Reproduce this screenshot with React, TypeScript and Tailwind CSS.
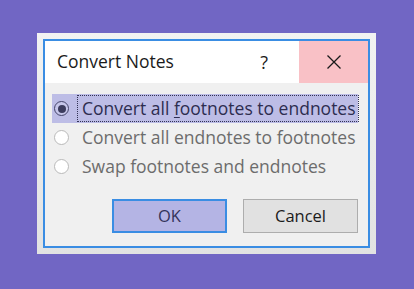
import { useState } from "react";

const options = [
  { id: "f2e", before: "Convert all ", key: "f", after: "ootnotes to endnotes" },
  { id: "e2f", before: "Convert all endnotes to footnotes", key: "", after: "" },
  { id: "swap", before: "Swap footnotes and endnotes", key: "", after: "" },
];

function Radio({ checked }: { checked: boolean }) {
  return (
    <span
      className={
        checked
          ? "flex h-[15px] w-[15px] items-center justify-center rounded-full border-[1.5px] border-[#44446a] bg-[#c6c6ea]"
          : "flex h-[15px] w-[15px] items-center justify-center rounded-full border-[1.5px] border-[#b9b9b9] bg-white"
      }
    >
      {checked && <span className="h-[8px] w-[8px] rounded-full bg-[#3c3c5e]" />}
    </span>
  );
}

export default function App() {
  const [selected, setSelected] = useState("f2e");

  return (
    <div className="h-[289px] w-[414px] bg-[#7166c4] pl-[37px] pt-[33px] font-['Open_Sans','Noto_Sans',sans-serif]">
      {/* outer frame */}
      <div className="w-[339px] bg-gradient-to-b from-[#f2f2f2] to-[#e2e2e2] p-[6px]">
        <div className="border-2 border-[#3a8de3]">
          {/* title bar */}
          <div className="flex h-[42px] items-center bg-white">
            <span className="pl-[12px] text-[17.5px] leading-none text-[#1b1b1b]">Convert Notes</span>
            <span className="ml-auto mr-[31px] text-[18px] leading-none text-[#1b1b1b]">?</span>
            <button className="flex h-[42px] w-[69px] items-center justify-center bg-[#f9c1c6]">
              <svg width="16" height="16" viewBox="0 0 16 16">
                <path d="M1.5 1.5 L14.5 14.5 M14.5 1.5 L1.5 14.5" stroke="#1a1a1a" strokeWidth="1.3" fill="none" />
              </svg>
            </button>
          </div>

          {/* body */}
          <div className="h-[163px] bg-[#f0f0f0] px-[7px] pt-[11px]">
            <div className="flex flex-col">
              {options.map((o) => {
                const on = selected === o.id;
                return (
                  <label
                    key={o.id}
                    onClick={() => setSelected(o.id)}
                    className={
                      on
                        ? "flex h-[29px] w-[306px] items-center bg-[#bdbde6]"
                        : "flex h-[29px] w-[306px] items-center"
                    }
                  >
                    <span className="ml-[2px]">
                      <Radio checked={on} />
                    </span>
                    <span
                      className={
                        on
                          ? "ml-[8px] flex h-[27px] items-center border border-dotted border-[#333355] pl-[4px] pr-[2px] text-[17.5px] leading-none text-[#2d2d50]"
                          : "ml-[8px] flex h-[27px] items-center border border-transparent pl-[4px] pr-[2px] text-[17.5px] leading-none text-[#6c6c6c]"
                      }
                    >
                      <span className="whitespace-pre">
                        {o.before}
                        {o.key && <span className="underline underline-offset-2">{o.key}</span>}
                        {o.after}
                      </span>
                    </span>
                  </label>
                );
              })}
            </div>

            <div className="mt-[18px] flex justify-end gap-[16px] pr-[3px]">
              <button className="h-[34px] w-[115px] border-2 border-[#3a8de3] bg-[#b4b4e4] text-[16.5px] text-[#33335a]">
                OK
              </button>
              <button className="h-[34px] w-[115px] border border-[#adadad] bg-[#e1e1e1] text-[16.5px] text-[#1b1b1b]">
                Cancel
              </button>
            </div>
          </div>
        </div>
      </div>
    </div>
  );
}
